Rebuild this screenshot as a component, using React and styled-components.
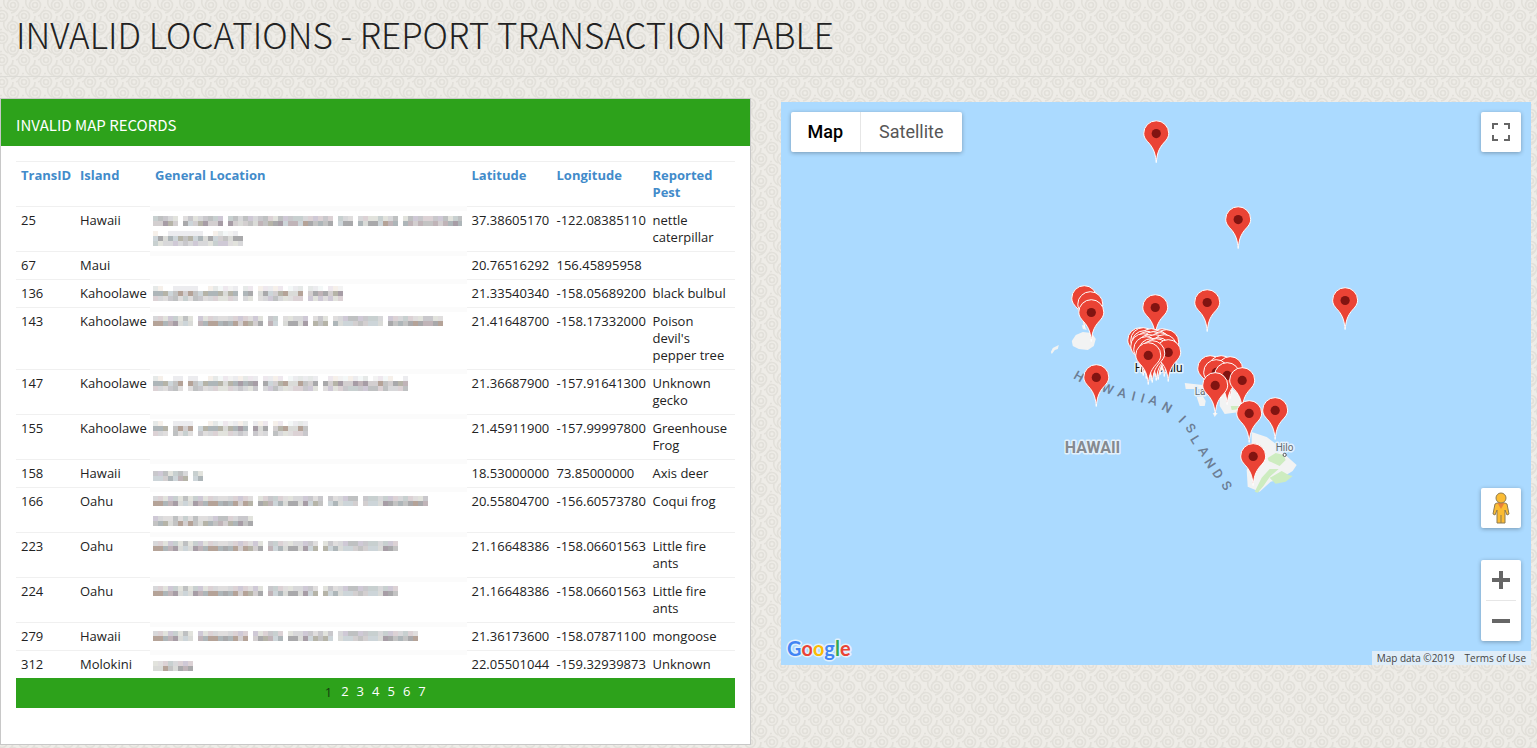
import React from "react";
import styled, { createGlobalStyle } from "styled-components";

const weave = encodeURIComponent(
  `<svg xmlns="http://www.w3.org/2000/svg" width="22" height="22" viewBox="0 0 22 22"><g fill="none" stroke="#e2e0da" stroke-width="1.7"><path d="M-9 16a11 11 0 0 1 11-8.500M-6 18a8 8 0 0 1 8-7.500M13 16a8 8 0 0 1-5 7.500M13 -6a8 8 0 0 1-5 7.500M16 16a11 11 0 0 0 7-8.500M2 -3.500a11 11 0 0 1 11 -3M18 6a9 9 0 0 1-7 7M4 0a8 8 0 0 0 4 9"/><g fill="#efede8"><circle cx="13" cy="5" r="5.500"/><circle cx="2" cy="16" r="5.500"/><circle cx="24" cy="16" r="5.500"/><circle cx="13" cy="27" r="5.500"/><circle cx="13" cy="5" r="2.500"/><circle cx="2" cy="16" r="2.500"/><circle cx="24" cy="16" r="2.500"/></g></g></svg>`
);

const GlobalStyle = createGlobalStyle`
  *, *::before, *::after { box-sizing: border-box; }
  body {
    margin: 0;
    background: #eeece7 url("data:image/svg+xml,${weave}");
    color: #222;
    font: 13px/17px "Open Sans", "Noto Sans", sans-serif;
  }
`;

const PageHeader = styled.header`
  padding: 6px 16px 15px;
  border-bottom: 1px solid #dcdbd6;
`;

const PageTitle = styled.h1`
  margin: 0;
  color: #222;
  font: 300 35px/55px "Noto Sans CJK JP", "Open Sans", sans-serif;
`;

const Columns = styled.main`
  display: grid;
  grid-template-columns: 1fr 1fr;
  gap: 30px;
  align-items: start;
  padding: 21px 6px 3px 0;
`;

const Panel = styled.section`
  min-width: 0;
  padding-bottom: 36px;
  border: 1px solid #c8c8c8;
  background: #fff;
`;

const PanelTitle = styled.h2`
  margin: 0;
  padding: 14px 15px 9px;
  background: #2da21b;
  color: #fff;
  font: 400 15px/24px "Noto Sans CJK JP", "Open Sans", sans-serif;
`;

const PanelBody = styled.div`
  padding: 15px 15px 0;
`;

const Table = styled.table`
  width: 100%;
  table-layout: fixed;
  border-collapse: separate;
  border-spacing: 0;
`;

const Col = styled.col`
  width: ${(p) => p.$w};
`;

const HeadCell = styled.th`
  padding: 5px;
  border-top: 1px solid #f0f0f0;
  text-align: left;
  vertical-align: top;
`;

const SortLink = styled.a`
  color: #428bca;
  font-weight: 700;
  text-decoration: none;
`;

const Cell = styled.td`
  padding: 5px;
  border-top: 1px solid #f0f0f0;
  vertical-align: top;
`;

const MaskedCell = styled(Cell)`
  padding: 0 3px;
  border-top-color: #fbfbfb;
  background: linear-gradient(#fbfbfb 4px, #fff 4px);
`;

const Mosaic = styled.svg`
  display: block;
`;

const Pager = styled.nav`
  display: flex;
  justify-content: center;
  gap: 8px;
  padding: 5px 0 7px;
  background: #2da21b;
`;

const PageLink = styled.a`
  color: #fff;
  text-decoration: none;
`;

const CurrentPage = styled.span`
  padding: 1px 1px 0 0;
  color: #163d10;
`;

const MapFrame = styled.section`
  position: relative;
  min-width: 0;
  margin-top: 4px;
  aspect-ratio: 4 / 3;
  overflow: hidden;
  background: #abdaff;
  font-family: Roboto, "Open Sans", sans-serif;
`;

const MapDrawing = styled.svg`
  display: block;
  width: 100%;
  height: 100%;
`;

const MapTypes = styled.div`
  position: absolute;
  top: 10px;
  left: 10px;
  display: flex;
  border-radius: 2px;
  background: #fff;
  box-shadow: 0 1px 4px rgba(0, 0, 0, 0.3);
`;

const MapTypeButton = styled.button`
  height: 40px;
  padding: 0 ${(p) => (p.$divided ? "18px" : "17px")};
  border: 0;
  border-left: ${(p) => (p.$divided ? "1px solid #e6e6e6" : "0")};
  background: none;
  color: ${(p) => (p.$active ? "#000" : "#565656")};
  font: ${(p) => (p.$active ? 500 : 400)} 18px/40px Roboto, sans-serif;
`;

const ControlGroup = styled.div`
  position: absolute;
  right: 10px;
  ${(p) => p.$edge}: ${(p) => p.$inset};
  display: flex;
  flex-direction: column;
  align-items: center;
  width: 40px;
  border-radius: 2px;
  background: #fff;
  box-shadow: 0 1px 4px rgba(0, 0, 0, 0.3);
`;

const ControlButton = styled.button`
  display: grid;
  place-items: center;
  width: 40px;
  height: 40px;
  padding: 0;
  border: 0;
  background: none;
`;

const Divider = styled.span`
  width: 30px;
  height: 1px;
  background: #e6e6e6;
`;

const Attribution = styled.div`
  position: absolute;
  right: 0;
  bottom: 0;
  display: flex;
  gap: 10px;
  padding: 0 5px;
  background: rgba(245, 245, 245, 0.7);
  color: #444;
  font: 10px/14px "Open Sans", "Noto Sans", sans-serif;
`;

const TermsLink = styled.a`
  color: #444;
  text-decoration: none;
`;

const GoogleMark = styled.a`
  position: absolute;
  left: 4px;
  bottom: 0;
  display: block;
  height: 32px;
`;

/* Each masked line: top offset, number of block rows, and word lengths in blocks. */
const records = [
  ["25", "Hawaii", [[9, 2, [5, 8, 21, 3, 8, 12]], [24, 3, [18]]], "37.38605170", "-122.08385110", "nettle caterpillar"],
  ["67", "Maui", [], "20.76516292", "156.45895958", ""],
  ["136", "Kahoolawe", [[6, 3, [17, 2, 9, 7]]], "21.33540340", "-158.05689200", "black bulbul"],
  ["143", "Kahoolawe", [[8, 2, [8, 13, 2, 5, 3, 10, 11]]], "21.41648700", "-158.17332000", "Poison devil's pepper tree"],
  ["147", "Kahoolawe", [[6, 3, [6, 14, 11, 17]]], "21.36687900", "-157.91641300", "Unknown gecko"],
  ["155", "Kahoolawe", [[6, 3, [3, 4, 10, 3, 7]]], "21.45911900", "-157.99997800", "Greenhouse Frog"],
  ["158", "Hawaii", [[11, 2, [7, 2]]], "18.53000000", "73.85000000", "Axis deer"],
  ["166", "Oahu", [[8, 2, [20, 13, 6, 13]], [28, 2, [20]]], "20.55804700", "-156.60573780", "Coqui frog"],
  ["223", "Oahu", [[8, 2, [22, 10, 15]]], "21.16648386", "-158.06601563", "Little fire ants"],
  ["224", "Oahu", [[8, 2, [22, 10, 15]]], "21.16648386", "-158.06601563", "Little fire ants"],
  ["279", "Hawaii", [[8, 2, [8, 10, 6, 9, 16]]], "21.36173600", "-158.07871100", "mongoose"],
  ["312", "Molokini", [[10, 2, [8]]], "22.05501044", "-159.32939873", "Unknown"],
];

const faint = ["#f3f3f3", "#ececef", "#fff", "#f6f0ea", "#e6e9e8", "#f4f8f8", "#eee8ee"];
const medium = ["#d8d8da", "#c9c8cc", "#e0dede", "#c8d0d0", "#dcd2d5", "#cfc9d6", "#e2e3dd", "#bfc1c2"];
const strong = ["#c3c3c3", "#a9a9ab", "#d3cfd0", "#aeb6b9", "#c0b4b8", "#dadbd8", "#a79da6", "#b6b4a8", "#cdd5d9", "#b5a398"];

function MaskedText({ lines }) {
  if (!lines.length) return null;
  const blocks = [];
  lines.forEach(([top, rows, words], line) => {
    let col = 0;
    words.forEach((length) => {
      for (let i = 0; i < length; i++, col++) {
        for (let r = 0; r < rows; r++) {
          const tones = rows === 3 ? [faint, strong, medium][r] : [medium, strong][r];
          const seed = (col * col * 7 + col * 13 + r * 5 + top * 3 + line) % 97;
          blocks.push(
            <rect key={`${line}-${col}-${r}`} x={col * 5} y={top + r * 5} width="5" height="5" fill={tones[seed % tones.length]} />
          );
        }
      }
      col += 1;
    });
  });
  return (
    <Mosaic width="309" height={lines.length > 1 ? 44 : 27} shapeRendering="crispEdges" role="img" aria-label="Hidden location">
      {blocks}
    </Mosaic>
  );
}

/* Centre of each pin's head, back to front. */
const pins = [
  [375, 31], [457, 117], [303, 196], [309, 202], [564, 198], [426, 200], [374, 205], [310, 210],
  [359, 238], [362, 238], [381, 239], [385, 240], [370, 239], [363, 241], [376, 241], [366, 242],
  [372, 242], [379, 243], [362, 244], [368, 245], [374, 245], [383, 245], [365, 247], [377, 248],
  [370, 249], [375, 249], [387, 250], [371, 251], [367, 253],
  [429, 266], [440, 266], [449, 267], [435, 270], [446, 273], [315, 275], [461, 278], [434, 283],
  [494, 308], [468, 311], [472, 354],
];

const Pin = ({ x, y }) => (
  <g transform={`translate(${x + 0.5} ${y + 0.5})`}>
    <path
      d="M0 29C-.8 21-2 17-5 12.500C-8 8-12.500 5.500-12.500-.3A12.500 12.500 0 0 1 12.500-.3C12.500 5.500 8 8 5 12.500C2 17 .8 21 0 29Z"
      fill="#ea4335"
      stroke="#fff"
    />
    <circle r="4.600" fill="#811411" />
  </g>
);

/* Letter, centre x, centre y, angle, advance width. */
const arcLetters = [
  ["H", 298, 274, 30, 9], ["A", 313, 281, 26, 8], ["W", 327, 286, 20, 11], ["A", 341, 290, 16, 8],
  ["I", 353, 294, 14, 4], ["I", 362, 296, 16, 4], ["A", 372, 298, 20, 8], ["N", 386, 305, 30, 9],
  [" ", 394, 311, 40, 4], ["I", 402, 317, 46, 4], ["S", 410, 326, 50, 8], ["L", 415, 337, 58, 7],
  ["A", 423, 349, 58, 8], ["N", 430, 361, 57, 9], ["D", 438, 372, 57, 9], ["S", 446, 384, 57, 8],
];

const arcPoints = arcLetters.map(([, cx, cy, angle, w]) => {
  const a = (angle * Math.PI) / 180;
  const dx = -w / 2;
  const dy = 5;
  return [
    Math.round(cx + dx * Math.cos(a) - dy * Math.sin(a)),
    Math.round(cy + dx * Math.sin(a) + dy * Math.cos(a)),
  ];
});

const halo = { stroke: "#e3f1fc", strokeWidth: 3, strokeLinejoin: "round", paintOrder: "stroke" };

function HawaiiMap() {
  return (
    <MapDrawing viewBox="0 0 751 563" role="img" aria-label="Map of reported locations around Hawaii">
      <g fill="#f2f3f3">
        <path d="M291 239l4-6 7-3 9 1 4 6-2 7-6 4-9-1-6-3z" />
        <path d="M270 250l2-4 6-3-1 4-3 1-3 4z" />
        <path d="M301 223l3 1 2 4-4-1z" />
        <path d="M350 240l9-6 11 5 12 10 8 10-7 9-12-2-10-10z" />
        <path d="M404 281l18 2 5 4-22 0z" />
        <path d="M416 295l6-1 3 5-1 5-5 0z" />
        <path d="M432 311l5 0-3 4z" />
        <path d="M439 290l8-6 12 8 6 14-6 4-15 2-5-8z" />
        <path d="M471 330l15 5 8 6 13 14 9 8-4 6-14 9-8 2-11 10-12-5-1-17 5-12z" />
      </g>
      <g fill="#cdecc0">
        <path d="M450 304l8 0 2 3-9 1z" />
        <path d="M487 356l8-5 8 2 2 5-6 6-11-5z" />
        <path d="M481 376l8-9 9 0-9 8-6 9-6 7-3-1z" />
        <path d="M489 376l12-7 7 4 4 1-7 6-10 2z" />
      </g>
      <text x="354" y="270" fill="#111" fontSize="12" {...halo}>Honolulu</text>
      <text x="414" y="293" fill="#63696f" fontSize="10" {...halo}>La</text>
      <text x="495" y="349" fill="#63696f" fontSize="10" {...halo}>Hilo</text>
      <circle cx="504" cy="353" r="1.600" fill="#fff" stroke="#555" />
      <text x="284" y="351" fill="#858a90" fontSize="16" fontWeight="700" {...halo}>HAWAII</text>
      <text
        x={arcPoints.map((p) => p[0]).join(" ")}
        y={arcPoints.map((p) => p[1]).join(" ")}
        rotate={arcLetters.map((l) => l[3]).join(" ")}
        fill="#6c7d94"
        fontSize="13"
        fontWeight="500"
      >
        {arcLetters.map((l) => l[0]).join("")}
      </text>
      {pins.map(([x, y]) => <Pin key={`${x}-${y}`} x={x} y={y} />)}
    </MapDrawing>
  );
}

const headings = ["TransID", "Island", "General Location", "Latitude", "Longitude", "Reported Pest"];
const widths = ["59px", "75px", "auto", "85px", "96px", "87px"];

export default function App() {
  return (
    <>
      <GlobalStyle />
      <PageHeader>
        <PageTitle>INVALID LOCATIONS - REPORT TRANSACTION TABLE</PageTitle>
      </PageHeader>
      <Columns>
        <Panel>
          <PanelTitle>INVALID MAP RECORDS</PanelTitle>
          <PanelBody>
            <Table>
              <colgroup>{widths.map((w, i) => <Col key={i} $w={w} />)}</colgroup>
              <thead>
                <tr>
                  {headings.map((h) => (
                    <HeadCell key={h} scope="col"><SortLink href="#sort">{h}</SortLink></HeadCell>
                  ))}
                </tr>
              </thead>
              <tbody>
                {records.map(([id, island, lines, lat, lng, pest]) => (
                  <tr key={id}>
                    <Cell>{id}</Cell>
                    <Cell>{island}</Cell>
                    <MaskedCell><MaskedText lines={lines} /></MaskedCell>
                    <Cell>{lat}</Cell>
                    <Cell>{lng}</Cell>
                    <Cell>{pest}</Cell>
                  </tr>
                ))}
              </tbody>
            </Table>
            <Pager aria-label="Pages">
              <CurrentPage aria-current="page">1</CurrentPage>
              {[2, 3, 4, 5, 6, 7].map((n) => <PageLink key={n} href={`#page-${n}`}>{n}</PageLink>)}
            </Pager>
          </PanelBody>
        </Panel>
        <MapFrame>
          <HawaiiMap />
          <MapTypes>
            <MapTypeButton type="button" $active>Map</MapTypeButton>
            <MapTypeButton type="button" $divided>Satellite</MapTypeButton>
          </MapTypes>
          <ControlGroup $edge="top" $inset="10px">
            <ControlButton type="button" aria-label="Toggle fullscreen">
              <svg width="18" height="18" viewBox="0 0 18 18" fill="#666">
                <path d="M0 0h6v2H2v4H0zM12 0h6v6h-2V2h-4zM0 12h2v4h4v2H0zM16 12h2v6h-6v-2h4z" />
              </svg>
            </ControlButton>
          </ControlGroup>
          <ControlGroup $edge="bottom" $inset="137px">
            <ControlButton type="button" aria-label="Street View">
              <svg width="18" height="32" viewBox="0 0 18 32" stroke="#8d7b52" strokeWidth="1">
                <path d="M5 11h8l2 1 2 10-2 1-2-5v13H5V18l-2 5-2-1 2-10z" fill="#fbbc34" />
                <path d="M9 23v8" fill="none" />
                <path d="M5.500 11h7L9 17z" fill="#e8813a" stroke="none" />
                <circle cx="9" cy="6" r="5" fill="#fbbc34" />
              </svg>
            </ControlButton>
          </ControlGroup>
          <ControlGroup $edge="bottom" $inset="24px">
            <ControlButton type="button" aria-label="Zoom in">
              <svg width="18" height="18" viewBox="0 0 18 18" fill="#666"><path d="M7 0h4v7h7v4h-7v7H7v-7H0V7h7z" /></svg>
            </ControlButton>
            <Divider />
            <ControlButton type="button" aria-label="Zoom out">
              <svg width="18" height="18" viewBox="0 0 18 18" fill="#666"><path d="M0 7h18v4H0z" /></svg>
            </ControlButton>
          </ControlGroup>
          <GoogleMark href="#google-maps" aria-label="Google">
            <svg width="72" height="32" viewBox="0 0 72 32" fontFamily="Lato, sans-serif" fontSize="20" fontWeight="700" {...halo}>
              <text x="2" y="23">
                <tspan fill="#4285f4">G</tspan>
                <tspan fill="#ea4335">o</tspan>
                <tspan fill="#fbbc05">o</tspan>
                <tspan fill="#4285f4">g</tspan>
                <tspan fill="#34a853">l</tspan>
                <tspan fill="#ea4335">e</tspan>
              </text>
            </svg>
          </GoogleMark>
          <Attribution>
            <span>Map data ©2019</span>
            <TermsLink href="#terms">Terms of Use</TermsLink>
          </Attribution>
        </MapFrame>
      </Columns>
    </>
  );
}
